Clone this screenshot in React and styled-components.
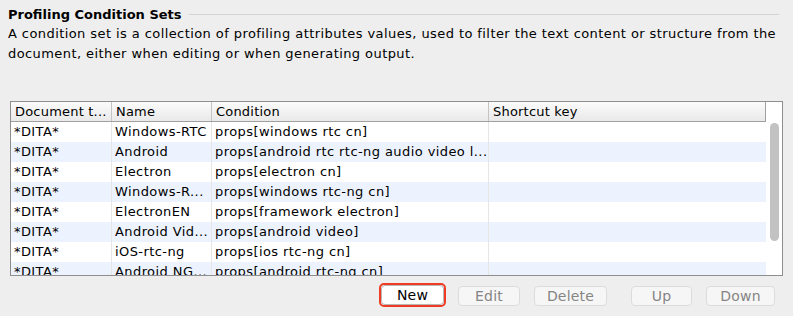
import styled, { createGlobalStyle } from "styled-components";

const GlobalStyle = createGlobalStyle`
  html, body {
    margin: 0;
    padding: 0;
    background: #eeeeee;
  }
  body {
    font-family: "DejaVu Sans", "Liberation Sans", sans-serif;
    font-size: 13px;
    letter-spacing: 0.42px;
    color: #000;
  }
`;

const rows = [
  ["*DITA*", "Windows-RTC", "props[windows rtc cn]"],
  ["*DITA*", "Android", "props[android rtc rtc-ng audio video l..."],
  ["*DITA*", "Electron", "props[electron cn]"],
  ["*DITA*", "Windows-R...", "props[windows rtc-ng cn]"],
  ["*DITA*", "ElectronEN", "props[framework electron]"],
  ["*DITA*", "Android Vid...", "props[android video]"],
  ["*DITA*", "iOS-rtc-ng", "props[ios rtc-ng cn]"],
  ["*DITA*", "Android NG...", "props[android rtc-ng cn]"],
];

const buttons = [
  { label: "Edit", width: 62, gap: 12 },
  { label: "Delete", width: 73, gap: 14 },
  { label: "Up", width: 61, gap: 24 },
  { label: "Down", width: 69, gap: 14 },
];

const App = () => {
  return (
    <>
      <GlobalStyle />
      <Page>
        <TitleRow>
          <Title>Profiling Condition Sets</Title>
          <Rule />
        </TitleRow>
        <Description>
          A condition set is a collection of profiling attributes values, used
          to filter the text content or structure from the document, either
          when editing or when generating output.
        </Description>
        <Table>
          <Viewport>
            <HeaderRow>
              <HeaderCell>Document t...</HeaderCell>
              <HeaderCell>Name</HeaderCell>
              <HeaderCell>Condition</HeaderCell>
              <HeaderCell $last>Shortcut key</HeaderCell>
            </HeaderRow>
            {rows.map((r, i) => (
              <Row key={i} $odd={i % 2 === 1}>
                <Cell>{r[0]}</Cell>
                <Cell>{r[1]}</Cell>
                <Cell>{r[2]}</Cell>
                <Cell $last></Cell>
              </Row>
            ))}
          </Viewport>
          <Gutter>
            <Thumb />
          </Gutter>
        </Table>
        <Buttons>
          <Focus>
            <Button $enabled $width={63}>
              New
            </Button>
          </Focus>
          {buttons.map((b) => (
            <Button key={b.label} $width={b.width} $gap={b.gap}>
              {b.label}
            </Button>
          ))}
        </Buttons>
      </Page>
    </>
  );
};

export default App;

const Page = styled.div`
  width: 793px;
  height: 316px;
  box-sizing: border-box;
  padding: 6px 10px 0 8px;
  overflow: hidden;
`;

const TitleRow = styled.div`
  display: flex;
  align-items: center;
  height: 17px;
  margin-right: 4px;
`;

const Title = styled.div`
  font-weight: bold;
  letter-spacing: 0;
  white-space: nowrap;
`;

const Rule = styled.div`
  flex: 1;
  height: 0;
  border-top: 1px solid #d4d4d4;
  margin-left: 7px;
  margin-top: -1px;
`;

const Description = styled.p`
  margin: 1px 0 0;
  line-height: 20px;
  width: 778px;
`;

const Table = styled.div`
  margin: 37px 0 0 2px;
  width: 773px;
  height: 175px;
  box-sizing: border-box;
  border: 1px solid #8e8e8e;
  background: #fff;
  display: flex;
  overflow: hidden;
`;

const Viewport = styled.div`
  flex: 1;
  overflow: hidden;
`;

const columns = "101px 100px 277px 1fr";

const HeaderRow = styled.div`
  display: grid;
  grid-template-columns: ${columns};
  height: 20px;
  box-sizing: border-box;
  background: linear-gradient(#fbfbfb, #e9e9e9);
  border-bottom: 1px solid #a0a0a0;
`;

const HeaderCell = styled.div`
  padding-left: 4px;
  line-height: 19px;
  letter-spacing: 0.2px;
  white-space: nowrap;
  overflow: hidden;
  border-right: 1px solid ${(p) => (p.$last ? "#a0a0a0" : "#c4c4c4")};
`;

const Row = styled.div`
  display: grid;
  grid-template-columns: ${columns};
  height: 20px;
  background: ${(p) => (p.$odd ? "#edf3fe" : "#ffffff")};
`;

const Cell = styled.div`
  padding-left: 3px;
  line-height: 20px;
  white-space: nowrap;
  overflow: hidden;
  border-right: 1px solid ${(p) => (p.$last ? "transparent" : "#e6e6e6")};
`;

const Gutter = styled.div`
  width: 16px;
  background: #fff;
  padding-top: 21px;
  display: flex;
  justify-content: center;
`;

const Thumb = styled.div`
  width: 9px;
  height: 118px;
  border-radius: 5px;
  background: #c2c2c2;
`;

const Buttons = styled.div`
  display: flex;
  align-items: center;
  margin: 9px 0 0 373px;
`;

const Focus = styled.div`
  border: 2px solid #ef3b24;
  border-radius: 5px;
  margin: -2px 0 0 -2px;
  display: flex;
`;

const Button = styled.div`
  width: ${(p) => p.$width}px;
  margin-left: ${(p) => p.$gap || 0}px;
  height: 20px;
  box-sizing: border-box;
  border-radius: 4px;
  background: ${(p) => (p.$enabled ? "#ffffff" : "#f6f6f6")};
  border: 1px solid ${(p) => (p.$enabled ? "#b8b8b8" : "#dcdcdc")};
  color: ${(p) => (p.$enabled ? "#000" : "#858585")};
  font-size: 14px;
  letter-spacing: 0.2px;
  line-height: 18px;
  text-align: center;
`;
